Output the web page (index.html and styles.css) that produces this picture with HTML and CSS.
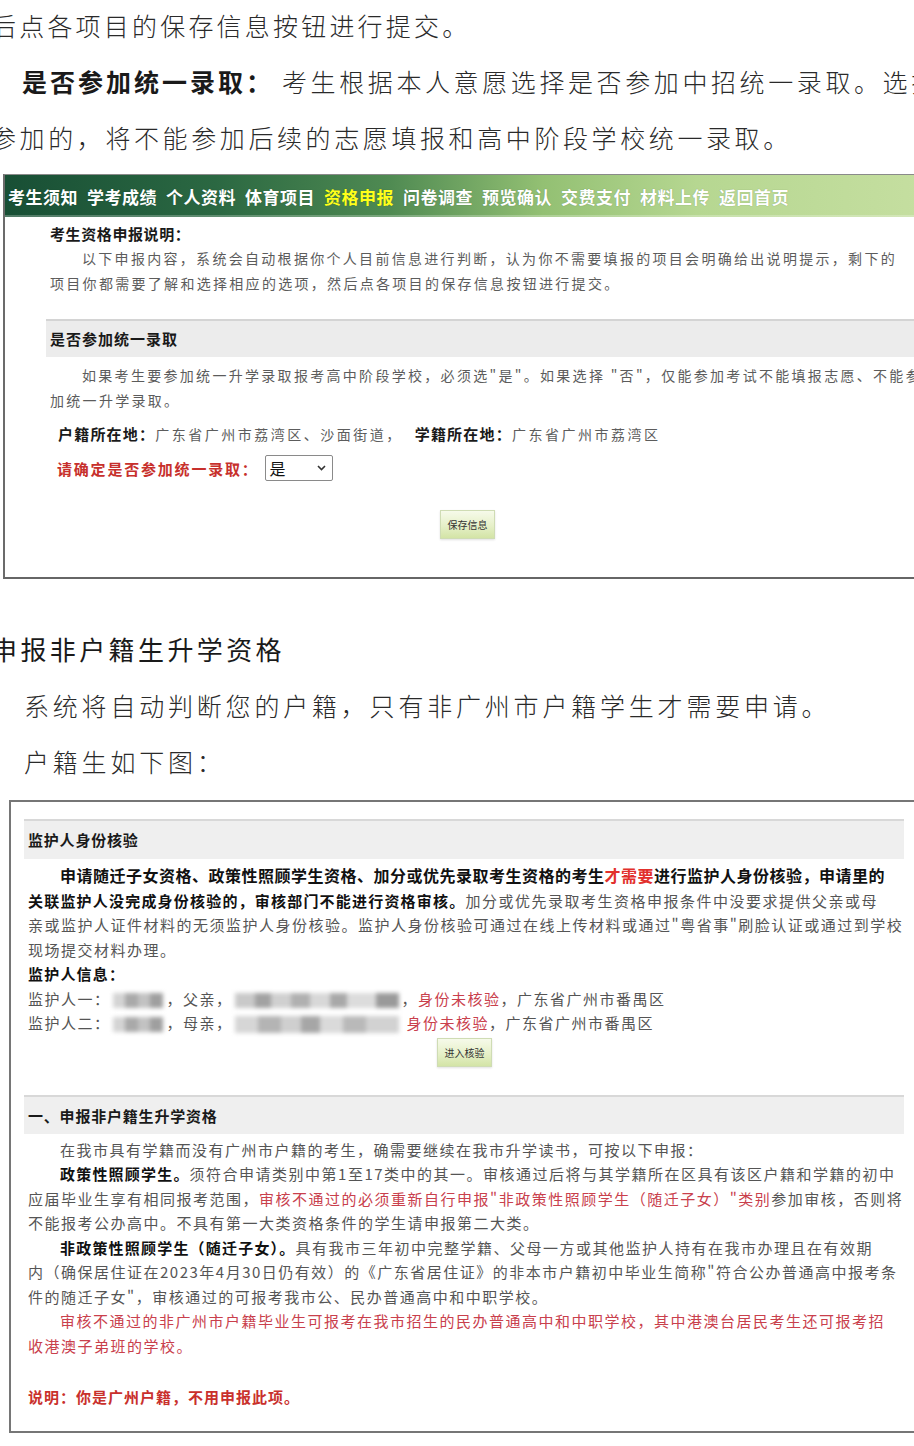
FILE: index.html
```html
<!DOCTYPE html>
<html lang="zh-CN">
<head>
<meta charset="utf-8">
<title>资格申报</title>
<link rel="stylesheet" href="styles.css">
</head>
<body>
<div class="doc">
  <p class="big first">后点各项目的保存信息按钮进行提交。</p>
  <p class="big second"><b>是否参加统一录取：</b>考生根据本人意愿选择是否参加中招统一录取。选择不</p>
  <p class="big third">参加的，将不能参加后续的志愿填报和高中阶段学校统一录取。</p>

  <div class="shot1">
    <div class="nav">
      <span>考生须知</span><span>学考成绩</span><span>个人资料</span><span>体育项目</span><span class="on">资格申报</span><span>问卷调查</span><span>预览确认</span><span>交费支付</span><span>材料上传</span><span>返回首页</span>
    </div>
    <div class="s1body">
      <div class="l ttl">考生资格申报说明：</div>
      <div class="l g ind">以下申报内容，系统会自动根据你个人目前信息进行判断，认为你不需要填报的项目会明确给出说明提示，剩下的</div>
      <div class="l g">项目你都需要了解和选择相应的选项，然后点各项目的保存信息按钮进行提交。</div>
      <div class="band1">是否参加统一录取</div>
      <div class="l g ind p1">如果考生要参加统一升学录取报考高中阶段学校，必须选"是"。如果选择 "否"，仅能参加考试不能填报志愿、不能参</div>
      <div class="l g">加统一升学录取。</div>
      <div class="l hk"><b>户籍所在地：</b><span class="g">广东省广州市荔湾区、沙面街道，</span><b class="gap">学籍所在地：</b><span class="g">广东省广州市荔湾区</span></div>
      <div class="selrow"><span class="redlbl">请确定是否参加统一录取：</span><span class="sel"><span>是</span><svg width="9" height="6" viewBox="0 0 9 6"><path d="M1 1 L4.5 4.5 L8 1" fill="none" stroke="#333" stroke-width="1.6"/></svg></span></div>
      <div class="btnrow b1"><span class="btn">保存信息</span></div>
    </div>
  </div>

  <p class="big head">申报非户籍生升学资格</p>
  <p class="big sub">系统将自动判断您的户籍，只有非广州市户籍学生才需要申请。</p>
  <p class="big sub">户籍生如下图：</p>

  <div class="shot2">
    <div class="s2inner">
      <div class="band2">监护人身份核验</div>
      <div class="t2 first2">
        <div class="m ind bk"><b>申请随迁子女资格、政策性照顾学生资格、加分或优先录取考生资格的考生<span class="hot">才需要</span>进行监护人身份核验，申请里的</b></div>
        <div class="m"><b class="bk">关联监护人没完成身份核验的，审核部门不能进行资格审核。</b>加分或优先录取考生资格申报条件中没要求提供父亲或母</div>
        <div class="m">亲或监护人证件材料的无须监护人身份核验。监护人身份核验可通过在线上传材料或通过"粤省事"刷脸认证或通过到学校</div>
        <div class="m">现场提交材料办理。</div>
        <div class="m"><b class="bk">监护人信息：</b></div>
        <div class="m">监护人一：<span class="blur nm"></span>，父亲，<span class="blur id"></span>，<span class="pk">身份未核验</span>，广东省广州市番禺区</div>
        <div class="m">监护人二：<span class="blur nm"></span>，母亲，<span class="blur id id2"></span> <span class="pk">身份未核验</span>，广东省广州市番禺区</div>
      </div>
      <div class="btnrow b2"><span class="btn">进入核验</span></div>

      <div class="band2 band3">一、申报非户籍生升学资格</div>
      <div class="t2 p3">
        <div class="m ind">在我市具有学籍而没有广州市户籍的考生，确需要继续在我市升学读书，可按以下申报：</div>
        <div class="m ind"><b class="bk">政策性照顾学生。</b>须符合申请类别中第1至17类中的其一。审核通过后将与其学籍所在区具有该区户籍和学籍的初中</div>
        <div class="m">应届毕业生享有相同报考范围，<span class="pk">审核不通过的必须重新自行申报"非政策性照顾学生（随迁子女）"类别</span>参加审核，否则将</div>
        <div class="m">不能报考公办高中。不具有第一大类资格条件的学生请申报第二大类。</div>
        <div class="m ind"><b class="bk">非政策性照顾学生（随迁子女）。</b>具有我市三年初中完整学籍、父母一方或其他监护人持有在我市办理且在有效期</div>
        <div class="m">内（确保居住证在2023年4月30日仍有效）的《广东省居住证》的非本市户籍初中毕业生简称"符合公办普通高中报考条</div>
        <div class="m">件的随迁子女"，审核通过的可报考我市公、民办普通高中和中职学校。</div>
        <div class="m ind pk">审核不通过的非广州市户籍毕业生可报考在我市招生的民办普通高中和中职学校，其中港澳台居民考生还可报考招</div>
        <div class="m pk">收港澳子弟班的学校。</div>
        <div class="m note">说明：你是广州户籍，不用申报此项。</div>
      </div>
    </div>
  </div>
</div>
</body>
</html>
```

FILE: styles.css
```css
html, body {
  margin: 0;
  padding: 0;
  background: #ffffff;
}
body {
  width: 914px;
  overflow: hidden;
  font-family: "Noto Sans CJK SC", "Noto Sans", sans-serif;
}
.doc {
  width: 914px;
  overflow: hidden;
}

/* large document text */
.big {
  margin: 0;
  font-size: 25px;
  line-height: 56px;
  letter-spacing: 3.6px;
  color: #2a2a2a;
  font-weight: 300;
  white-space: nowrap;
}
.big b {
  font-weight: 700;
  color: #1a1a1a;
  letter-spacing: 3px;
  margin-right: 8px;
}
.first {
  margin-top: -3px;
  margin-left: -9px;
  letter-spacing: 3.2px;
}
.second {
  padding-left: 22px;
}
.third {
  margin-left: -9px;
}
.head {
  margin-top: 42px;
  margin-left: -9px;
  font-size: 26px;
  letter-spacing: 3.4px;
  color: #1a1a1a;
  font-weight: 400;
}
.sub {
  padding-left: 24px;
  letter-spacing: 3.8px;
}

/* screenshot 1 */
.shot1 {
  margin: 9px 0 0 3px;
  width: 960px;
  border-left: 2px solid #6b6b6b;
  border-top: 1px solid #8a8a8a;
  border-bottom: 2px solid #666666;
  font-size: 14px;
}
.nav {
  height: 42px;
  display: flex;
  align-items: center;
  gap: 9px;
  padding-left: 3px;
  background: linear-gradient(90deg, #184f35 0%, #2b6842 22%, #4f8a52 40%, #93c073 56%, #b6d791 72%, #c8e0a3 100%);
  box-shadow: inset 0 -2px 0 rgba(255,255,255,0.25);
}
.nav span {
  color: #ffffff;
  font-weight: 700;
  font-size: 17px;
  letter-spacing: 0.5px;
  white-space: nowrap;
  text-shadow: 0 0 1px rgba(0,40,20,0.35);
}
.nav span.on {
  color: #ffff1a;
}
.s1body {
  padding: 4px 0 38px 41px;
  width: 900px;
}
.l {
  line-height: 25px;
  padding-left: 4px;
  white-space: nowrap;
  letter-spacing: 2.3px;
  font-size: 14px;
}
.ttl {
  font-weight: 700;
  font-size: 15px;
  letter-spacing: 0.6px;
  color: #1a1a1a;
}
.g {
  color: #5c5c5c;
}
.ind {
  padding-left: 36px;
}
.band1 {
  margin-top: 23px;
  border-top: 2px solid #d4d4d4;
  background: #ececec;
  line-height: 36px;
  height: 36px;
  padding-left: 4px;
  font-weight: 700;
  font-size: 15px;
  letter-spacing: 1px;
  color: #1a1a1a;
}
.p1 {
  margin-top: 6px;
}
.hk {
  margin-top: 8px;
  padding-left: 12px;
  letter-spacing: 2.5px;
}
.hk b {
  color: #1a1a1a;
  font-size: 15px;
  letter-spacing: 1.2px;
}
.hk b.gap {
  margin-left: 12px;
}
.selrow {
  margin-top: 7px;
  height: 28px;
  display: flex;
  align-items: center;
  padding-left: 11px;
}
.redlbl {
  color: #c7302c;
  font-weight: 700;
  font-size: 15px;
  letter-spacing: 1.8px;
  white-space: nowrap;
}
.sel {
  margin-left: 6px;
  width: 68px;
  height: 26px;
  box-sizing: border-box;
  border: 1px solid #8a8a8a;
  border-radius: 2px;
  background: #fff;
  display: flex;
  align-items: center;
  justify-content: space-between;
  padding: 0 6px 0 4px;
  font-size: 16px;
  color: #111;
}
.btnrow {
  display: flex;
}
.b1 {
  margin-top: 28px;
  padding-left: 394px;
}
.btn {
  width: 55px;
  height: 29px;
  box-sizing: border-box;
  border: 1px solid #cfdcb4;
  background: linear-gradient(180deg, #f6faea 0%, #e6f0c8 55%, #d3e4a6 100%);
  font-size: 10px;
  color: #333;
  display: flex;
  align-items: center;
  justify-content: center;
  white-space: nowrap;
  box-shadow: 0 1px 2px rgba(0,0,0,0.12);
}

/* screenshot 2 */
.shot2 {
  margin: 11px 0 0 9px;
  width: 960px;
  border: 2px solid #767676;
  border-right: none;
  padding: 17px 0 22px 13px;
  box-sizing: border-box;
}
.s2inner {
  width: 880px;
}
.band2 {
  border-top: 2px solid #d8d8d8;
  background: #efefef;
  height: 38px;
  line-height: 38px;
  padding-left: 4px;
  font-weight: 700;
  font-size: 15px;
  letter-spacing: 0.8px;
  color: #1a1a1a;
}
.band3 {
  margin-top: 28px;
  height: 37px;
  line-height: 37px;
}
.t2 {
  font-size: 15px;
  color: #555555;
}
.first2 {
  margin-top: 4px;
}
.p3 {
  margin-top: 4px;
}
.m {
  line-height: 24.5px;
  padding-left: 4px;
  white-space: nowrap;
  letter-spacing: 1.5px;
}
.m.ind {
  padding-left: 36px;
}
.bk {
  color: #111111;
}
.m.bk b {
  font-size: 16px;
  letter-spacing: 0.5px;
}
b.bk {
  font-size: 15px;
  letter-spacing: 1.2px;
}
.hot {
  color: #e2302c;
}
.pk {
  color: #c9404c;
}
.note {
  margin-top: 26.5px;
  color: #c9302c;
  font-weight: 700;
  letter-spacing: 1px;
}
.blur {
  display: inline-block;
  vertical-align: middle;
  height: 15px;
  filter: blur(2px);
}
.blur.nm {
  width: 50px;
  margin: 0 4px 0 2px;
  background: linear-gradient(90deg, #d4d4d4 0 25%, #a9a9a9 25% 50%, #c2c2c2 50% 75%, #9f9f9f 75% 100%);
}
.blur.id {
  width: 164px;
  margin: 0 3px 0 2px;
  background: linear-gradient(90deg, #c9c9c9 0 12%, #a2a2a2 12% 22%, #d0d0d0 22% 34%, #b0b0b0 34% 46%, #d8d8d8 46% 58%, #a8a8a8 58% 68%, #dcdcdc 68% 86%, #9a9a9a 86% 100%);
}
.blur.id2 {
  height: 17px;
  background: linear-gradient(90deg, #d6d6d6 0 14%, #b4b4b4 14% 28%, #cfcfcf 28% 40%, #a6a6a6 40% 52%, #dadada 52% 66%, #b9b9b9 66% 80%, #d2d2d2 80% 100%);
}
.b2 {
  margin-top: 2px;
  padding-left: 413px;
}
```
